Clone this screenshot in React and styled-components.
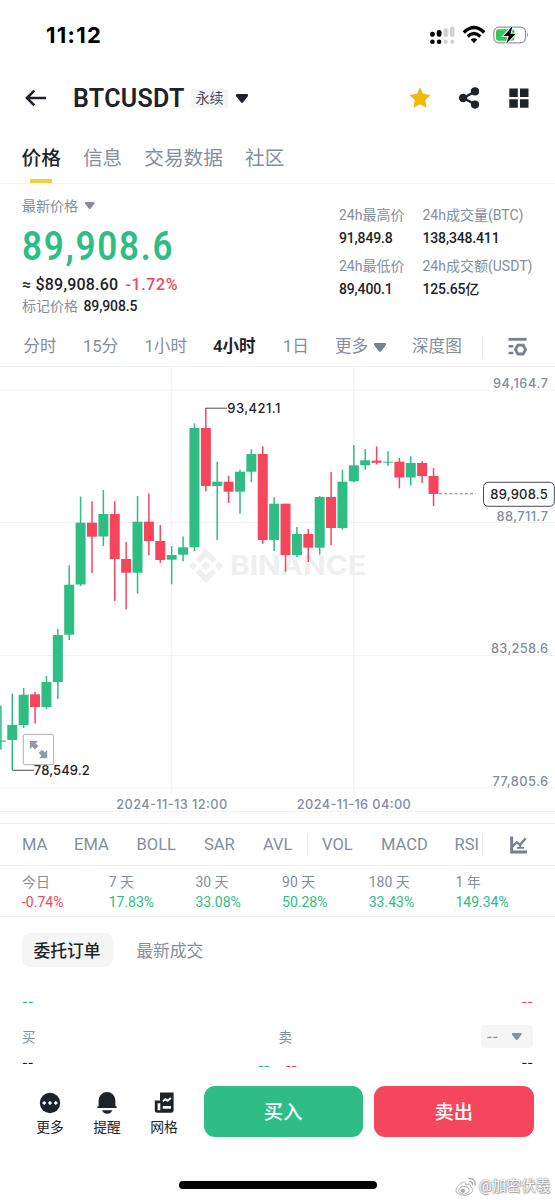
import React from "react";
import styled, { createGlobalStyle } from "styled-components";

const GREEN = "#2ebd85";
const RED = "#f6465d";
const INK = "#1e2329";
const GRAY = "#848e9c";

const intervals = ["分时", "15分", "1小时", "4小时", "1日"];
const periods = [
  ["今日", "-0.74%"],
  ["7 天", "17.83%"],
  ["30 天", "33.08%"],
  ["90 天", "50.28%"],
  ["180 天", "33.43%"],
  ["1 年", "149.34%"],
];

// [up, high, body top, body bottom, low]
const candles = [
  [1, 338.7, 373.4, 374.6, 382.7],
  [1, 326.5, 358, 373, 403],
  [1, 321, 327.7, 358, 361],
  [0, 324.7, 327.3, 340, 356.5],
  [1, 309, 315, 340, 342],
  [1, 262, 268, 315, 332],
  [1, 198.3, 217.7, 267.7, 273],
  [1, 129.5, 155.7, 217.5, 219],
  [0, 134.3, 155.7, 169.7, 206],
  [1, 123, 147, 169.5, 179],
  [0, 134.3, 147, 192, 234],
  [0, 175, 192, 205.7, 242.3],
  [1, 129, 154.7, 205.7, 226.7],
  [0, 126.5, 154.7, 174, 188.3],
  [0, 158, 174, 193, 196],
  [1, 179, 188, 192.7, 217.3],
  [1, 169.5, 180.3, 187.7, 194.3],
  [1, 56.3, 61, 180.3, 184],
  [0, 41, 61, 119, 124.3],
  [1, 94.7, 114.7, 119, 173],
  [0, 108.7, 114.7, 124.7, 136],
  [1, 102.7, 104.7, 124.7, 146.7],
  [1, 82.3, 87, 104.7, 115.3],
  [0, 79.3, 87, 173, 176.7],
  [1, 130.3, 136.7, 173, 184],
  [0, 136.7, 136.7, 188, 204.7],
  [1, 160, 167, 188, 190],
  [0, 162, 167, 180.7, 195],
  [1, 129, 130, 180.7, 187.5],
  [0, 105, 130, 161, 178],
  [1, 102.7, 114.7, 161, 162.7],
  [1, 78, 98.3, 114.3, 115.3],
  [1, 82, 93.3, 98.3, 102.7],
  [0, 79.3, 93.6, 95.8, 97.5],
  [1, 84.3, 94.7, 95.7, 99],
  [0, 91, 94.7, 110.5, 121.3],
  [1, 89.3, 96, 110.5, 118.5],
  [0, 94, 96, 109, 116],
  [0, 101, 109, 127, 139],
];

function Caret({ size = 12, color = INK }) {
  return (
    <svg width={size} height={size * 0.75} viewBox="0 0 12 9">
      <path d="M1 0h10q1 0 1 1v1L7 8.4q-1 .9-2 0L0 2V1q0-1 1-1z" fill={color} />
    </svg>
  );
}

function StatusIcons() {
  return (
    <svg width="99" height="20" viewBox="0 0 99 20">
      <g fill="#000">
        <rect x="0" y="6.8" width="4.8" height="5" rx="2" />
        <rect x="6.7" y="5" width="4.8" height="6.8" rx="2" />
        <circle cx="2.4" cy="16.8" r="2.3" />
        <circle cx="9.1" cy="16.8" r="2.3" />
      </g>
      <g fill="#d2d2d2">
        <rect x="13.5" y="3.3" width="4.4" height="8.7" rx="1.8" />
        <rect x="20.1" y="1.5" width="4.4" height="10.5" rx="1.8" />
        <circle cx="15.7" cy="16.8" r="2.1" />
        <circle cx="22.3" cy="16.8" r="2.1" />
      </g>
      <g fill="none" stroke="#000" strokeWidth="3.3">
        <path d="M33.8 7.5Q44 -2.4 54.2 7.5" />
        <path d="M37.7 11.5Q44 5.4 50.3 11.5" />
      </g>
      <path d="M40.7 14.6q3.3-2.8 6.6 0L44 18.2z" fill="#000" />
      <rect x="63.9" y="2.2" width="31.6" height="15.6" rx="4.8" fill="none" stroke="#979797" strokeWidth="1.2" />
      <rect x="66" y="4.3" width="18.5" height="11.4" rx="2.6" fill="#34c759" />
      <path d="M97 7.3q2 2.6 0 5z" fill="#979797" />
      <path d="M82.6 1 73.6 11h5.2L76.2 18.8 85.8 8.8h-5.3z" fill="#000" stroke="#fff" strokeWidth="2" paintOrder="stroke" />
    </svg>
  );
}

function Chart() {
  const xAt = (i) => 0.9 + i * 11.385;
  return (
    <ChartSvg width="555" height="456" viewBox="0 0 555 456">
      <g stroke="#f1f2f3" strokeWidth="1">
        {[23, 155.5, 288.5, 421].map((y) => (
          <path key={y} d={`M0 ${y}H555`} />
        ))}
        <path d="M171.7 0V428M353.8 0V428M0 444.5H555" />
      </g>
      <g fill="#efefef">
        <path d="M206 182l10.2 10.2-3.9 3.9-6.3-6.3-6.3 6.3-3.9-3.9zM206 216l10.2-10.2-3.9-3.9-6.3 6.3-6.3-6.3-3.9 3.9zM206 194.8l4.2 4.2-4.2 4.2-4.2-4.2zM192.9 195.1l3.9 3.9-3.9 3.9-3.9-3.9zM219.1 195.1l3.9 3.9-3.9 3.9-3.9-3.9z" />
        <text x="230" y="208.4" fontSize="26.5" fontWeight="700" textLength="136" lengthAdjust="spacingAndGlyphs">BINANCE</text>
      </g>
      {candles.map(([up, high, top, bottom, low], i) => (
        <g key={i} fill={up ? GREEN : RED}>
          <rect x={xAt(i) - 0.75} y={high} width="1.5" height={low - high} />
          <rect x={xAt(i) - 5} y={top} width="10" height={bottom - top} />
        </g>
      ))}
      <path d="M205.8 41.2H227M12.3 403.3H34" stroke="#474d57" fill="none" />
      <path d="M439 126.8H476" stroke="#76808f" strokeDasharray="3 2.2" />
      <g fontSize="13" fontWeight="500" fill={INK}>
        <text x="227.3" y="46" textLength="53">93,421.1</text>
        <text x="33.8" y="408.4" textLength="56">78,549.2</text>
      </g>
      <g fontSize="12.8" fontWeight="500" fill={GRAY} textAnchor="end">
        <text x="548" y="21" textLength="55">94,164.7</text>
        <text x="548" y="154" textLength="51.5">88,711.7</text>
        <text x="548" y="286.3" textLength="57">83,258.6</text>
        <text x="548" y="418.8" textLength="55.5">77,805.6</text>
      </g>
      <g fontSize="12.8" fontWeight="500" fill={GRAY} textAnchor="middle">
        <text x="171.7" y="441.8" textLength="111">2024-11-13 12:00</text>
        <text x="353.8" y="441.8" textLength="114">2024-11-16 04:00</text>
      </g>
      <rect x="483.5" y="115.3" width="70.8" height="24" rx="4.5" fill="#fff" stroke="#474d57" />
      <text x="490.3" y="132.2" fontSize="13" fontWeight="500" fill={INK} textLength="57.5">89,908.5</text>
      <rect x="23.3" y="367.4" width="30.3" height="30.3" rx="1.5" fill="#fff" stroke="#aab0ba" />
      <path
        d="M29.8 374h8.2l-2.4 2.4 2.7 2.7-3.3 3.3-2.7-2.7-2.5 2.5zM47.2 391.2H39l2.4-2.4-2.7-2.7 3.3-3.3 2.7 2.7 2.5-2.5z"
        fill="#929aa5"
      />
    </ChartSvg>
  );
}

export default function App() {
  return (
    <>
      <GlobalStyle />
      <Page>
        <StatusBar>
          <span>11:12</span>
          <StatusIcons />
        </StatusBar>

        <Header>
          <svg width="22" height="18" viewBox="0 0 22 18" fill="none" stroke={INK} strokeWidth="2.5">
            <path d="M21 9H2M9.3 1.6 1.9 9l7.4 7.4" />
          </svg>
          <h1>BTCUSDT</h1>
          <Tag>永续</Tag>
          <Caret />
          <HeaderActions>
            <svg width="22" height="22" viewBox="0 0 22 22">
              <path
                d="M11 1.2l3 6.2 6.7.9-4.9 4.8 1.2 6.9-6-3.2L5 20l1.2-6.9L1.3 8.3 8 7.4z"
                fill="#f0b90b"
                stroke="#f0b90b"
                strokeLinejoin="round"
              />
            </svg>
            <ShareIcon width="22" height="22" viewBox="0 0 22 22" fill={INK}>
              <path d="M17 4.5 5.5 11 17 17.5" fill="none" stroke={INK} strokeWidth="2.5" />
              <circle cx="17" cy="4.4" r="4.1" />
              <circle cx="5.1" cy="11" r="4.2" />
              <circle cx="17" cy="17.6" r="4.1" />
            </ShareIcon>
            <svg width="20" height="20" viewBox="0 0 20 20">
              <path d="M.3.5h8.5V9H.3zM11 .5h8.5V9H11zM.3 11.2h8.5v8.5H.3zM11 11.2h8.5v8.5H11z" fill={INK} />
            </svg>
          </HeaderActions>
        </Header>

        <MainTabs>
          <MainTab $active>价格</MainTab>
          <MainTab>信息</MainTab>
          <MainTab>交易数据</MainTab>
          <MainTab>社区</MainTab>
        </MainTabs>

        <Ticker>
          <div>
            <PriceLabel>
              最新价格 <Caret size={9.5} color={GRAY} />
            </PriceLabel>
            <BigPrice>89,908.6</BigPrice>
            <FiatRow>
              ≈ $89,908.60 <em>-1.72%</em>
            </FiatRow>
            <MarkRow>
              标记价格 <b>89,908.5</b>
            </MarkRow>
          </div>
          <Stats>
            <Stat>
              <dt>24h最高价</dt>
              <dd>91,849.8</dd>
            </Stat>
            <Stat>
              <dt>24h成交量(BTC)</dt>
              <dd>138,348.411</dd>
            </Stat>
            <Stat>
              <dt>24h最低价</dt>
              <dd>89,400.1</dd>
            </Stat>
            <Stat>
              <dt>24h成交额(USDT)</dt>
              <dd>125.65亿</dd>
            </Stat>
          </Stats>
        </Ticker>

        <Intervals>
          {intervals.map((t) => (
            <Interval key={t} $active={t === "4小时"}>{t}</Interval>
          ))}
          <Interval>
            更多 <Caret color="#76808f" />
          </Interval>
          <Interval>深度图</Interval>
          <Divider />
          <svg width="20" height="20" viewBox="0 0 20 20" fill="none" stroke="#76808f">
            <path d="M.5 2.3H18.6" strokeWidth="2.8" />
            <path d="M.5 9.3H5.3M.5 16H5.3" strokeWidth="2.6" />
            <path d="M9.9 8.2h5.2l2.5 4.4-2.5 4.4H9.9l-2.5-4.4z" strokeWidth="2.8" />
          </svg>
        </Intervals>

        <Chart />

        <Indicators>
          <span>MA</span>
          <span>EMA</span>
          <span>BOLL</span>
          <span>SAR</span>
          <span>AVL</span>
          <Divider />
          <span>VOL</span>
          <span>MACD</span>
          <span>RSI</span>
          <Divider />
          <svg width="18" height="18" viewBox="0 0 18 18" fill="none" stroke="#76808f">
            <path d="M1.7.5V15.9H17" strokeWidth="3" />
            <path d="M2.5 10.5 6.7 6.2 10 8.8 15.7 2.2" strokeWidth="2.3" />
            <path d="M10.3 8v4M7 11.8h7" strokeWidth="1.8" />
          </svg>
        </Indicators>

        <Periods>
          {periods.map(([name, change]) => (
            <Period key={name} $down={change.startsWith("-")}>
              <span>{name}</span>
              <strong>{change}</strong>
            </Period>
          ))}
        </Periods>

        <OrderTabs>
          <OrderTab $active>委托订单</OrderTab>
          <OrderTab>最新成交</OrderTab>
        </OrderTabs>

        <DepthRow>
          <Dash $color={GREEN}>--</Dash>
          <Dash $color={RED}>--</Dash>
        </DepthRow>
        <BookHead>
          <span>买</span>
          <span>卖</span>
          <Precision>
            <Dash $color={GRAY}>--</Dash>
            <Caret size={9.5} color={GRAY} />
          </Precision>
        </BookHead>
        <BookRow>
          <Dash $color={INK}>--</Dash>
          <Middle>
            <Dash $color={GREEN}>--</Dash>
            <Dash $color={RED}>--</Dash>
          </Middle>
          <Dash $color={INK}>--</Dash>
        </BookRow>

        <BottomBar>
          <Action>
            <svg width="22" height="22" viewBox="0 0 22 22">
              <circle cx="11" cy="11" r="10.2" fill={INK} />
              <path d="M5.2 9.2 7 11l-1.8 1.8L3.4 11zM11 9.2l1.8 1.8-1.8 1.8L9.2 11zM16.8 9.2l1.8 1.8-1.8 1.8L15 11z" fill="#fff" stroke="#fff" strokeWidth=".6" />
            </svg>
            更多
          </Action>
          <Action>
            <svg width="22" height="22" viewBox="0 0 22 22" fill={INK}>
              <path d="M2.6 14.2V8.4a8.4 8.4 0 0 1 16.8 0v5.8h1.2V16H1.4v-1.8zM6 18.2h10.4q-1.6 3.5-5.2 3.5T6 18.2z" />
            </svg>
            提醒
          </Action>
          <Action>
            <svg width="22" height="22" viewBox="0 0 22 22">
              <path d="M7 .5H20.6V18.4q0 2.4-2.4 2.4H4.2q-2.4 0-2.4-2.4V8.4H7z" fill={INK} />
              <path d="M4.6 11.2h2.7v7H4.6zM9.8 14.1h8.1v2.7H9.8z" fill="#fff" />
              <path d="M10 9.4 12.4 7l2.3 1.8L18 5.9" fill="none" stroke="#fff" strokeWidth="1.9" />
            </svg>
            网格
          </Action>
          <TradeButtons>
            <TradeButton $color={GREEN}>买入</TradeButton>
            <TradeButton $color={RED}>卖出</TradeButton>
          </TradeButtons>
        </BottomBar>

        <HomeIndicator />
        <Watermark>
          <svg width="22" height="20" viewBox="0 0 22 20" fill="#fff" stroke="#aaa" strokeWidth=".9">
            <path d="M8.5 5.2C5 6.2 1 10.2 1 13.3c0 3 3.8 5 8 5 5 0 8.8-2.8 8.8-5.5 0-1.7-1.3-2.5-2.5-2.8.6-1.7.2-2.8-1.2-2.9-1-.1-2.4.3-3.4.8.5-1.9-.3-3.2-2.2-2.7z" />
            <ellipse cx="8.8" cy="13.2" rx="5.3" ry="3.8" />
            <circle cx="8" cy="13.7" r="1.7" fill="#aaa" />
            <path d="M14 4.4q4-.3 3.6 4M13.6 1.6q7-.6 6.6 6.8" fill="none" strokeWidth="1.4" />
          </svg>
          @加密伏羲
        </Watermark>
      </Page>
    </>
  );
}

const GlobalStyle = createGlobalStyle`
  * {
    box-sizing: border-box;
  }
  body, h1, dl, dt, dd {
    margin: 0;
  }
  body {
    background: #fff;
  }
  svg {
    display: block;
    flex-shrink: 0;
  }
`;

const Page = styled.div`
  position: relative;
  width: 555px;
  height: 1200px;
  overflow: hidden;
  display: flex;
  flex-direction: column;
  background: #fff;
  color: ${INK};
  font-family: Roboto, "Noto Sans CJK SC", sans-serif;
  white-space: nowrap;
`;

const StatusBar = styled.div`
  height: 70px;
  padding: 0 26px 0 46px;
  display: flex;
  align-items: center;
  justify-content: space-between;
  span {
    font: 700 22px/24px Inter, sans-serif;
    letter-spacing: 1.3px;
    color: #000;
  }
`;

const Header = styled.header`
  height: 56px;
  padding: 0 26px 0 25px;
  display: flex;
  align-items: center;
  h1 {
    margin-left: 26px;
    width: 118px;
    padding-top: 2px;
    font-size: 25px;
    line-height: 30px;
    font-weight: 600;
    letter-spacing: 0.3px;
  }
  > svg:last-of-type {
    margin-left: 8px;
  }
`;

const Tag = styled.span`
  width: 37px;
  height: 19px;
  border-radius: 3px;
  background: #f5f5f5;
  color: #474d57;
  font-size: 14px;
  line-height: 19px;
  text-align: center;
`;

const HeaderActions = styled.div`
  margin-left: auto;
  display: flex;
  align-items: center;
  gap: 27px;
`;

const ShareIcon = styled.svg`
  margin-right: 2px;
`;

const MainTabs = styled.nav`
  height: 58px;
  padding-left: 21.5px;
  display: flex;
  gap: 22px;
  border-bottom: 1px solid #f1f2f3;
`;

const MainTab = styled.div`
  height: 57px;
  font-size: 19.7px;
  line-height: 65px;
  font-weight: ${(p) => (p.$active ? 500 : 400)};
  color: ${(p) => (p.$active ? INK : GRAY)};
  &::after {
    content: "";
    display: ${(p) => (p.$active ? "block" : "none")};
    width: 22px;
    height: 4px;
    margin: -12px auto 0;
    background: #f0d03c;
  }
`;

const Ticker = styled.section`
  height: 143px;
  padding: 11px 0 0 22px;
  display: grid;
  grid-template-columns: 317px auto;
`;

const PriceLabel = styled.div`
  display: flex;
  align-items: center;
  gap: 7px;
  height: 22px;
  font-size: 14px;
  line-height: 20px;
  color: ${GRAY};
`;

/* narrow, widely tracked figures */
const BigPrice = styled.div`
  height: 57px;
  font-size: 40px;
  line-height: 60px;
  font-weight: 600;
  letter-spacing: 2px;
  transform: scaleX(0.875);
  transform-origin: left;
  color: ${GREEN};
`;

const FiatRow = styled.div`
  height: 22px;
  font-size: 16px;
  line-height: 22px;
  font-weight: 500;
  letter-spacing: 0.2px;
  em {
    margin-left: 3px;
    font-style: normal;
    letter-spacing: 0.6px;
    color: ${RED};
  }
`;

const MarkRow = styled.div`
  font-size: 14px;
  line-height: 21px;
  color: ${GRAY};
  b {
    margin-left: 2px;
    font-size: 14px;
    font-weight: 500;
    letter-spacing: -0.1px;
    color: ${INK};
  }
`;

const Stats = styled.dl`
  padding-top: 9px;
  display: grid;
  grid-template-columns: 83.5px auto;
  grid-auto-rows: 51px;
`;

const Stat = styled.div`
  dt {
    font-size: 14px;
    line-height: 22px;
    color: ${GRAY};
  }
  dd {
    font-size: 14px;
    line-height: 24px;
    font-weight: 500;
    letter-spacing: -0.15px;
  }
`;

const Intervals = styled.div`
  height: 40px;
  padding: 1px 0 0 23.5px;
  display: grid;
  grid-template-columns: 59.5px 61.5px 68.5px 70px 52px 77px 70px 26px 20px;
  align-items: center;
  border-bottom: 1px solid #f1f2f3;
`;

const Interval = styled.div`
  display: flex;
  align-items: center;
  gap: 5.5px;
  font-size: 16.6px;
  line-height: 24px;
  font-weight: ${(p) => (p.$active ? 600 : 400)};
  color: ${(p) => (p.$active ? INK : GRAY)};
`;

const Divider = styled.i`
  width: 1px;
  height: 22px;
  background: #eaecef;
`;

const ChartSvg = styled.svg`
  font-family: Inter, sans-serif;
`;

const Indicators = styled.div`
  height: 43px;
  padding-left: 22px;
  display: grid;
  grid-template-columns: 52px 62.5px 67.5px 59px 44px 15px 59px 73.5px 27px 28.5px 20px;
  align-items: center;
  border-top: 1px solid #eaecef;
  border-bottom: 1px solid #f1f2f3;
  font-size: 16.5px;
  color: ${GRAY};
  span {
    overflow: hidden;
  }
`;

const Periods = styled.div`
  height: 51px;
  padding: 6px 0 0 22px;
  display: grid;
  grid-template-columns: repeat(6, 86.7px);
  border-bottom: 1px solid #eff0f2;
`;

const Period = styled.div`
  display: flex;
  flex-direction: column;
  font-size: 14px;
  line-height: 20px;
  color: ${GRAY};
  strong {
    font-weight: 400;
    color: ${(p) => (p.$down ? RED : GREEN)};
  }
`;

const OrderTabs = styled.div`
  padding: 16px 0 0 21.5px;
  display: flex;
  gap: 11.5px;
`;

const OrderTab = styled.div`
  height: 34px;
  padding: 0 12px;
  border-radius: 8px;
  background: ${(p) => (p.$active ? "#f5f5f5" : "none")};
  color: ${(p) => (p.$active ? INK : GRAY)};
  font-size: 16.8px;
  line-height: 36px;
  font-weight: ${(p) => (p.$active ? 500 : 400)};
`;

const Dash = styled.span`
  font: 500 12.5px/20px Inter, sans-serif;
  color: ${(p) => p.$color};
`;

const DepthRow = styled.div`
  height: 58px;
  padding: 25px 22px 0;
  display: flex;
  justify-content: space-between;
`;

const BookHead = styled.div`
  height: 23px;
  padding: 0 22px;
  display: grid;
  grid-template-columns: 256.5px 202px 52.5px;
  align-items: center;
  font-size: 13.5px;
  line-height: 18px;
  color: ${GRAY};
`;

const Precision = styled.div`
  height: 23px;
  padding: 0 11.5px 0 6px;
  display: flex;
  align-items: center;
  justify-content: space-between;
  border-radius: 4px;
  background: #f5f5f5;
`;

const BookRow = styled.div`
  height: 38px;
  padding: 5px 22px 0;
  display: flex;
  justify-content: space-between;
`;

const Middle = styled.div`
  display: flex;
  gap: 16px;
  padding-top: 3px;
`;

const BottomBar = styled.footer`
  padding: 0 21.5px;
  display: grid;
  grid-template-columns: 57px 57px 57px auto;
`;

const Action = styled.div`
  display: flex;
  flex-direction: column;
  align-items: center;
  padding-top: 6px;
  font-size: 13.8px;
  line-height: 26px;
`;

const TradeButtons = styled.div`
  display: flex;
  gap: 11.5px;
  padding-left: 11px;
`;

const TradeButton = styled.button`
  flex: 1;
  height: 51px;
  padding: 0;
  border: 0;
  border-radius: 11px;
  background: ${(p) => p.$color};
  color: #fff;
  font: 500 19.3px/54px Roboto, "Noto Sans CJK SC", sans-serif;
`;

const HomeIndicator = styled.div`
  width: 198px;
  height: 7.5px;
  margin: 41px 0 0 179px;
  border-radius: 4px;
  background: #000;
`;

const Watermark = styled.div`
  position: absolute;
  right: 5px;
  bottom: 3px;
  display: flex;
  align-items: center;
  gap: 2px;
  font-size: 14.5px;
  line-height: 20px;
  color: #fff;
  text-shadow: 0 0 1px #777, 0 0 2px #999, 1px 1px 1px #aaa;
`;
